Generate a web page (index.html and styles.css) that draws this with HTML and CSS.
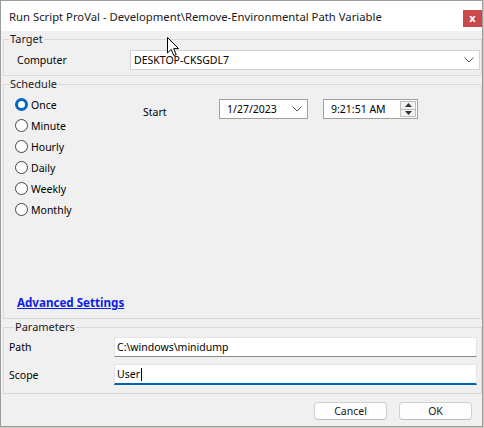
FILE: index.html
```html
<!DOCTYPE html>
<html>
<head>
<meta charset="utf-8">
<link rel="stylesheet" href="styles.css">
</head>
<body>
<div class="window">
  <div class="titlebar">
    <span class="title">Run Script ProVal - Development\Remove-Environmental Path Variable</span>
    <span class="close">x</span>
  </div>
  <div class="content">
    <fieldset class="group target">
      <legend>Target</legend>
      <div class="target-row">
        <span class="computer-lbl">Computer</span>
        <div class="combo">
          <span>DESKTOP-CKSGDL7</span>
          <svg class="chev" width="10" height="6" viewBox="0 0 10 6"><path d="M0.5 0.5 L5 5 L9.5 0.5" fill="none" stroke="#555" stroke-width="1"/></svg>
        </div>
      </div>
    </fieldset>
    <fieldset class="group schedule">
      <legend>Schedule</legend>
      <div class="sched-body">
        <div class="sched-top">
          <div class="radios">
            <div class="radio checked"><span class="circle"></span><span>Once</span></div>
            <div class="radio"><span class="circle"></span><span>Minute</span></div>
            <div class="radio"><span class="circle"></span><span>Hourly</span></div>
            <div class="radio"><span class="circle"></span><span>Daily</span></div>
            <div class="radio"><span class="circle"></span><span>Weekly</span></div>
            <div class="radio"><span class="circle"></span><span>Monthly</span></div>
          </div>
          <span class="start-lbl">Start</span>
          <div class="date">
            <span>1/27/2023</span>
            <svg class="chev" width="10" height="6" viewBox="0 0 10 6"><path d="M0.5 0.5 L5 5 L9.5 0.5" fill="none" stroke="#555" stroke-width="1"/></svg>
          </div>
          <div class="time">
            <span>9:21:51 AM</span>
            <div class="spin">
              <div class="spin-btn"><svg width="7" height="4" viewBox="0 0 7 4"><path d="M0 4 L3.5 0 L7 4 Z" fill="#333"/></svg></div>
              <div class="spin-btn"><svg width="7" height="4" viewBox="0 0 7 4"><path d="M0 0 L3.5 4 L7 0 Z" fill="#333"/></svg></div>
            </div>
          </div>
        </div>
        <a class="adv" href="#">Advanced Settings</a>
      </div>
    </fieldset>
    <fieldset class="group params">
      <legend>Parameters</legend>
      <div class="prow">
        <span class="plbl">Path</span>
        <div class="input">C:\windows\minidump</div>
      </div>
      <div class="prow">
        <span class="plbl">Scope</span>
        <div class="input focused">User<span class="caret"></span></div>
      </div>
    </fieldset>
    <div class="buttons">
      <button class="btn">Cancel</button>
      <button class="btn">OK</button>
    </div>
  </div>
  <svg class="cursor" width="13" height="20" viewBox="0 0 13 20"><path d="M0.5 0.5 L0.5 16 L4.2 12.4 L6.8 18.6 L9.2 17.6 L6.7 11.6 L11.6 11.6 Z" fill="#fff" stroke="#000" stroke-width="1" stroke-linejoin="miter"/></svg>
</div>
</body>
</html>
```
FILE: styles.css
```css
* { box-sizing: border-box; }
html, body { margin: 0; padding: 0; }
body {
  background: #cfcac2;
  font-family: "Noto Sans", "Open Sans", sans-serif;
  font-size: 10.5px;
  color: #000;
  width: 484px;
  height: 428px;
  overflow: hidden;
}
.window {
  position: relative;
  width: 483px;
  height: 427px;
  background: #f0f0f0;
  border: 1px solid #9c9c9c;
}
.titlebar {
  height: 30px;
  background: #fff;
  display: flex;
  align-items: center;
  padding-left: 8px;
  position: relative;
}
.title {
  font-size: 11.3px;
  color: #1a1a1a;
  white-space: nowrap;
}
.close {
  position: absolute;
  left: 462px;
  top: 9px;
  width: 19px;
  height: 17px;
  background: #c84a4c;
  color: #fff;
  font-size: 11px;
  font-weight: bold;
  display: flex;
  align-items: center;
  justify-content: center;
  line-height: 1;
  padding-bottom: 2px;
}
.content {
  display: flex;
  flex-direction: column;
}
.group {
  margin: 0 0 0 2px;
  width: 479px;
  border: 1px solid #d8d8d8;
  padding: 0;
  min-width: 0;
}
.group legend {
  margin-left: 5px;
  padding: 0 1px;
  line-height: 16px;
  font-size: 11px;
  color: #1a1a1a;
}
/* Target */
.target {
  height: 45px;
}
.target-row {
  display: flex;
  align-items: center;
  margin-top: 3px;
  padding-left: 13px;
}
.computer-lbl {
  width: 113px;
}
.combo {
  width: 350px;
  height: 20px;
  background: #fff;
  border: 1px solid #d4d4d4;
  display: flex;
  align-items: center;
  justify-content: space-between;
  padding: 0 5px 0 3px;
}
/* Schedule */
.schedule {
  height: 243px;
}
.sched-body {
  height: 226px;
  display: flex;
  flex-direction: column;
}
.sched-top {
  display: flex;
  align-items: flex-start;
  padding-left: 11px;
  margin-top: 2px;
}
.radios {
  width: 128px;
  display: flex;
  flex-direction: column;
}
.radio {
  height: 21px;
  display: flex;
  align-items: center;
  gap: 3px;
}
.circle {
  width: 13px;
  height: 13px;
  border-radius: 50%;
  border: 1px solid #444;
  background: #fff;
  flex: none;
}
.radio.checked .circle {
  border: 3.5px solid #0067c0;
  background: #fff;
}
.start-lbl {
  width: 76px;
  margin-top: 10px;
  line-height: 16px;
}
.date, .time {
  margin-top: 5px;
  height: 20px;
  background: #fff;
  border: 1px solid #a0a0a0;
  display: flex;
  align-items: center;
}
.date {
  width: 89px;
  justify-content: space-between;
  padding: 0 5px 0 7px;
}
.time {
  width: 95px;
  margin-left: 15px;
  padding: 0 1px 0 7px;
  justify-content: space-between;
}
.spin {
  width: 16px;
  height: 16px;
  display: flex;
  flex-direction: column;
  border: 1px solid #bdbdbd;
  background: #f3f3f3;
}
.spin-btn {
  flex: 1;
  display: flex;
  align-items: center;
  justify-content: center;
}
.spin-btn + .spin-btn { border-top: 1px solid #bdbdbd; }
.adv {
  margin-top: auto;
  margin-bottom: 7px;
  margin-left: 13px;
  line-height: 16px;
  font-size: 11.6px;
  font-weight: bold;
  color: #0a1ee6;
  text-decoration: underline;
  align-self: flex-start;
}
/* Parameters */
.params {
  height: 75px;
  padding: 0 4px 0 5px;
}
.prow {
  display: flex;
  align-items: center;
  margin-top: 2px;
}
.prow + .prow { margin-top: 7px; }
.plbl { width: 105px; }
.input {
  width: 363px;
  height: 20px;
  background: #fff;
  border: 1px solid #e4e4e4;
  border-bottom: 1px solid #8a8a8a;
  display: flex;
  align-items: center;
  padding-left: 2px;
}
.input.focused {
  height: 21px;
  border-bottom: 2px solid #0063b1;
}
.caret {
  width: 1px;
  height: 13px;
  background: #000;
  margin-left: 1px;
}
/* Buttons */
.buttons {
  display: flex;
  justify-content: flex-end;
  gap: 12px;
  padding: 8px 10px 0 0;
}
.btn {
  width: 73px;
  height: 18px;
  font-family: inherit;
  font-size: 10.5px;
  background: #fdfdfd;
  border: 1px solid #d0d0d0;
  border-bottom-color: #bcbcbc;
  border-radius: 4px;
  padding: 0;
  color: #1a1a1a;
}
.cursor {
  position: absolute;
  left: 166px;
  top: 36px;
}
```
